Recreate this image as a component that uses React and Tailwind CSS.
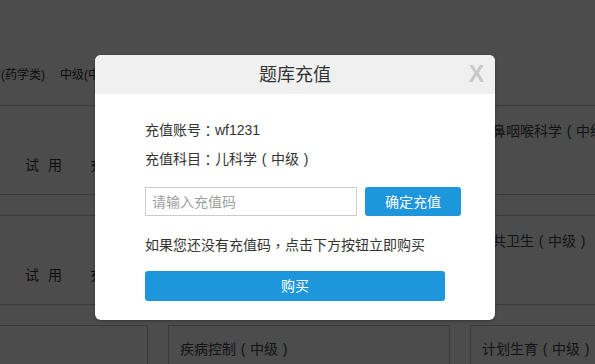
import React from 'react';

const font = { fontFamily: "'Liberation Sans', 'Noto Sans CJK SC', sans-serif" };

// full-width punctuation centred in its cell, as in the reference
function P({ children }) {
  return (
    <span className="inline-block w-[14px] text-center align-top leading-[20px]" style={{ fontFamily: "'Noto Sans CJK TC', sans-serif" }}>
      {children}
    </span>
  );
}

function Paren({ children }) {
  return <span className="inline-block w-[14px] text-center align-top">{children}</span>;
}

function Level({ name }) {
  return (
    <>
      {name}
      <Paren>(</Paren>中级<Paren>)</Paren>
    </>
  );
}

function ListRow({ name }) {
  return (
    <div className="grid grid-cols-[480px_1fr] h-[89px] border-b border-[#c4c4c4]">
      <div className="flex pt-[49px] pl-[25px] text-[14px] leading-[20px] text-[#333]">
        <span className="w-[65px] tracking-[9px]">试用</span>
        <span className="tracking-[9px]">充值</span>
      </div>
      <div className="pt-[15px] -ml-[2px] text-[14px] leading-[20px] text-[#444] whitespace-nowrap">
        <Level name={name} />
      </div>
    </div>
  );
}

function Card({ title }) {
  return (
    <div className="shrink-0 w-[282px] h-[60px] border border-[#c4c4c4] pt-[13px] pl-[11px] text-[14px] leading-[20px] text-[#444] whitespace-nowrap">
      {title && <Level name={title} />}
    </div>
  );
}

function RechargeModal() {
  return (
    <div className="ml-[95px] mt-[55px] w-[400px] rounded-[6px] bg-white overflow-hidden shadow-[0_1px_3px_rgba(0,0,0,0.3)]">
      <div className="relative h-[39px] bg-[#f0f0f0] flex items-center justify-center">
        <span className="text-[18px] leading-[24px] text-[#333]">题库充值</span>
        <span className="absolute right-[11px] top-[7px] text-[23px] leading-[24px] font-bold text-[#c8c8c8]">X</span>
      </div>
      <div className="px-[50px] pt-[26px] pb-[19px] text-[14px] leading-[20px] text-[#333]">
        <div className="h-[20px]">充值账号<P>：</P>wf1231</div>
        <div className="h-[20px] mt-[9px]">充值科目<P>：</P><Level name="儿科学" /></div>
        <div className="mt-[18px] flex gap-[8px]">
          <input
            className="shrink-0 w-[212px] h-[29px] border border-[#cccccc] px-[6px] text-[14px] text-[#333] placeholder:text-[#a0a0a0] outline-none"
            placeholder="请输入充值码"
            style={font}
          />
          <button className="shrink-0 w-[96px] h-[29px] rounded-[3px] bg-[#1e96dc] text-white text-[14px]">确定充值</button>
        </div>
        <div className="h-[20px] mt-[19px]">如果您还没有充值码<P>，</P>点击下方按钮立即购买</div>
        <button className="mt-[16px] w-[300px] h-[30px] rounded-[3px] bg-[#1e96dc] text-white text-[14px]">购买</button>
      </div>
    </div>
  );
}

export default function App() {
  return (
    <div className="relative w-[595px] h-[364px] overflow-hidden bg-white" style={font}>
      <div className="h-[106px] border-b border-[#c4c4c4] pt-[65px] flex text-[12px] leading-[20px] text-[#333] whitespace-nowrap">
        <span className="-ml-[11px]">学(药学类)</span>
        <span className="ml-[15px]">中级(中药学类)</span>
      </div>
      <ListRow name="耳鼻咽喉科学" />
      <div className="h-[21px] border-b border-[#c4c4c4]" />
      <ListRow name="公共卫生" />
      <div className="flex gap-[20px] -ml-[134px] mt-[20px]">
        <Card title="" />
        <Card title="疾病控制" />
        <Card title="计划生育" />
      </div>

      <div className="absolute inset-0 bg-black/70">
        <RechargeModal />
      </div>
    </div>
  );
}
